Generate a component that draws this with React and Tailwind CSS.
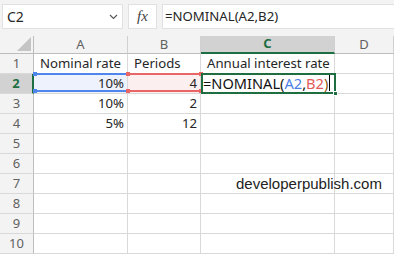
import React from "react";

const font = { fontFamily: '"Segoe UI","Noto Sans","Open Sans",sans-serif' };

function Cell({ w, children, align = "left", className = "" }) {
  return (
    <div
      className={`h-full shrink-0 border-r border-b border-[#d9d9d9] flex items-end pb-[1px] text-[13.2px] leading-[18px] text-[#262626] overflow-visible whitespace-nowrap ${
        align === "right" ? "justify-end pr-[3px]" : "pl-[6px]"
      } ${className}`}
      style={{ width: w }}
    >
      {children}
    </div>
  );
}

function RowHead({ n, active }) {
  return (
    <div
      className={`w-[34px] h-full shrink-0 flex items-center justify-center text-[13px] border-b border-[#d9d9d9] ${
        active
          ? "bg-[#d2d2d2] text-[#1e6e42] font-bold border-r-[2px] border-r-[#1e6e42]"
          : "bg-[#f3f3f3] text-[#616161] border-r border-r-[#bdbdbd]"
      }`}
    >
      {n}
    </div>
  );
}

export default function App() {
  const rows = [
    ["Nominal rate", "Periods", "Annual interest rate", ""],
    ["10%", "4", "", ""],
    ["10%", "2", "", ""],
    ["5%", "12", "", ""],
    ["", "", "", ""],
    ["", "", "", ""],
    ["", "", "", ""],
    ["", "", "", ""],
    ["", "", "", ""],
    ["", "", "", ""],
  ];
  const widths = [94, 73, 134, 59];
  return (
    <div className="w-[394px] h-[254px] bg-white overflow-hidden relative" style={font}>
      {/* formula bar */}
      <div className="h-[36px] bg-[#f3f3f3] flex items-start pt-[4px] pl-[2px] gap-[5px]">
        <div className="w-[121px] h-[25px] bg-white border border-[#e1e1e1] flex items-center justify-between pl-[4px] pr-[4px]">
          <span className="text-[14px] text-[#262626]">C2</span>
          <svg width="9" height="6" viewBox="0 0 9 6" className="mt-[1px]">
            <path d="M1 1 L4.5 4.5 L8 1" stroke="#555" strokeWidth="1.1" fill="none" />
          </svg>
        </div>
        <div className="w-[29px] h-[25px] bg-white border border-[#e1e1e1] flex items-center justify-center">
          <span className="italic text-[15px] text-[#444]" style={{ fontFamily: '"Liberation Serif","DejaVu Serif",serif' }}>
            fx
          </span>
        </div>
        <div className="flex-1 h-[25px] bg-white border-y border-l border-[#e1e1e1] flex items-center pl-[2px]">
          <span className="text-[13.2px] text-[#262626]">=NOMINAL(A2,B2)</span>
        </div>
      </div>

      {/* grid */}
      <div className="relative">
        {/* header row */}
        <div className="flex h-[18px]">
          <div className="w-[34px] h-full shrink-0 bg-[#f3f3f3] border-r border-b border-[#bdbdbd] relative">
            <svg width="14" height="14" className="absolute right-[2px] bottom-[2px]" viewBox="0 0 14 14">
              <path d="M14 0 L14 14 L0 14 Z" fill="#c4c4c4" />
            </svg>
          </div>
          {["A", "B", "C", "D"].map((c, i) => (
            <div
              key={c}
              className={`h-full shrink-0 flex items-center justify-center text-[13px] border-r border-[#d0d0d0] ${
                c === "C"
                  ? "bg-[#d2d2d2] text-[#1e6e42] font-bold border-b-[2px] border-b-[#1e6e42]"
                  : "bg-[#f3f3f3] text-[#616161] border-b border-b-[#bdbdbd]"
              }`}
              style={{ width: widths[i] }}
            >
              {c}
            </div>
          ))}
        </div>
        {rows.map((r, ri) => (
          <div key={ri} className="flex h-[20px]">
            <RowHead n={ri + 1} active={ri === 1} />
            <Cell w={widths[0]} align={ri >= 1 && ri <= 3 ? "right" : "left"} className={ri === 1 ? "bg-[#edf2fc]" : ""}>
              {r[0]}
            </Cell>
            <Cell w={widths[1]} align={ri >= 1 && ri <= 3 ? "right" : "left"} className={ri === 1 ? "bg-[#fcefef]" : ""}>
              {r[1]}
            </Cell>
            <Cell w={widths[2]}>
              {ri === 1 ? (
                <span className="text-[14.6px] ml-[-4px] flex items-center">
                  <span className="text-[#111]">=NOMINAL(</span>
                  <span className="text-[#4a7fe6]">A2</span>
                  <span className="text-[#111]">,</span>
                  <span className="text-[#e15b5b]">B2</span>
                  <span className="text-[#8a5a14]">)</span>
                  <span className="inline-block w-[1px] h-[16px] bg-black ml-[1px]"></span>
                </span>
              ) : (
                r[2]
              )}
            </Cell>
            <Cell w={widths[3]}>{r[3]}</Cell>
          </div>
        ))}

        {/* A2 blue range */}
        <div className="absolute left-[35px] top-[37px] w-[91px] h-[19px] border-y-[2px] border-[#4f86ec]"></div>
        <div className="absolute left-[33px] top-[36px] w-[4px] h-[4px] bg-[#4f86ec]"></div>
        <div className="absolute left-[33px] top-[53px] w-[4px] h-[4px] bg-[#4f86ec]"></div>
        {/* B2 red range */}
        <div className="absolute left-[128px] top-[37px] w-[73px] h-[19px] border-y-[2px] border-[#e86666]"></div>
        <div className="absolute left-[126px] top-[36px] w-[4px] h-[4px] bg-[#e86666]"></div>
        <div className="absolute left-[126px] top-[53px] w-[4px] h-[4px] bg-[#e86666]"></div>
        <div className="absolute left-[199px] top-[36px] w-[4px] h-[4px] bg-[#e86666]"></div>
        <div className="absolute left-[199px] top-[53px] w-[4px] h-[4px] bg-[#e86666]"></div>
        {/* C2 active */}
        <div className="absolute left-[201px] top-[37px] w-[135px] h-[21px] border-[2px] border-[#1e6e42]"></div>
        <div className="absolute left-[333px] top-[55px] w-[5px] h-[5px] bg-[#1e6e42] border border-white"></div>

        {/* watermark */}
        <div
          className="absolute left-[236px] top-[137px] text-[15px] text-[#222]"
          style={{ fontFamily: '"Liberation Sans",Arial,sans-serif' }}
        >
          developerpublish.com
        </div>
      </div>
    </div>
  );
}
